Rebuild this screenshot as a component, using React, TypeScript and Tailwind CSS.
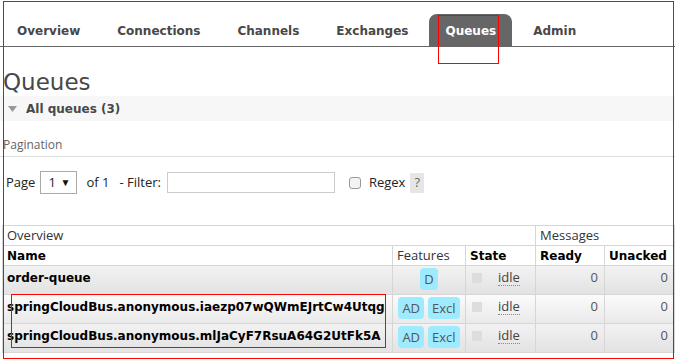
import React from "react";

const NAV = ["Overview", "Connections", "Channels", "Exchanges", "Queues", "Admin"];

interface QueueRow {
  name: string;
  features: string[];
  alt: boolean;
}

const ROWS: QueueRow[] = [
  { name: "order-queue", features: ["D"], alt: true },
  { name: "springCloudBus.anonymous.iaezp07wQWmEJrtCw4Utqg", features: ["AD", "Excl"], alt: false },
  { name: "springCloudBus.anonymous.mlJaCyF7RsuA64G2UtFk5A", features: ["AD", "Excl"], alt: true },
];

const verdana = "font-['DejaVu_Sans',Verdana,sans-serif]";
const body = "font-['Open_Sans','Noto_Sans',sans-serif]";

function Nav() {
  return (
    <div className="flex h-[47px] items-end gap-[5px] border-b border-[#666] pl-px">
      {NAV.map((n) => (
        <div
          key={n}
          className={`flex h-8 items-center px-4 pt-[2px] text-[12px] font-bold ${verdana} ${
            n === "Queues" ? "rounded-t-[8px] bg-[#666] text-white" : "text-[#484848]"
          }`}
        >
          {n}
        </div>
      ))}
    </div>
  );
}

function Pagination() {
  return (
    <>
      <div className={`mt-4 h-[20px] border-b border-[#ddd] pl-[3px] text-[12px] leading-4 text-[#666] ${body}`}>
        Pagination
      </div>
      <div className={`mt-[14px] flex h-[23px] items-center pl-[6px] text-[13px] text-[#222] ${body}`}>
        <span>Page</span>
        <div className="ml-[5px] flex h-[23px] w-[37px] items-center justify-between border border-[#aaa] pl-[7px] pr-[6px]">
          <span>1</span>
          <span className="text-[10px] text-[#111]">▼</span>
        </div>
        <span className="ml-[9px]">of 1</span>
        <span className="ml-[10px]">- Filter:</span>
        <div className="ml-[6px] h-[21px] w-[168px] border border-[#ccc]" />
        <div className="ml-[14px] h-[12px] w-[12px] rounded-[3px] border border-[#999] bg-[#f3f3f3]" />
        <span className="ml-[8px]">Regex</span>
        <span className="ml-[5px] flex h-[20px] w-[14px] items-center justify-center bg-[#e6e6e6] text-[#666]">?</span>
      </div>
    </>
  );
}

function Badge({ label }: { label: string }) {
  return (
    <span className="inline-flex h-[22px] items-center rounded-[4px] bg-[#9eeaff] px-[4px] text-[13px] leading-none text-[#555]">
      {label}
    </span>
  );
}

function QueueTable() {
  const cell = "border border-[#d6d6d6] px-[4px]";
  return (
    <table className={`ml-[2px] mt-[31px] w-[672px] table-fixed border-collapse ${body}`}>
      <colgroup>
        <col className="w-[390px]" />
        <col className="w-[73px]" />
        <col className="w-[70px]" />
        <col className="w-[69px]" />
        <col className="w-[70px]" />
      </colgroup>
      <thead>
        <tr className="h-[20px] text-[13px] leading-none text-[#333]">
          <th colSpan={3} className={`${cell} text-left font-normal`}>Overview</th>
          <th colSpan={2} className={`${cell} text-left font-normal`}>Messages</th>
        </tr>
        <tr className="h-[20px] text-[12px] leading-none text-black">
          <th className={`${cell} text-left font-bold ${verdana}`}>Name</th>
          <th className={`${cell} text-left text-[13px] font-normal text-[#333]`}>Features</th>
          <th className={`${cell} text-left font-bold ${verdana}`}>State</th>
          <th className={`${cell} text-left font-bold ${verdana}`}>Ready</th>
          <th className={`${cell} text-left font-bold ${verdana}`}>Unacked</th>
        </tr>
      </thead>
      <tbody>
        {ROWS.map((r) => (
          <tr
            key={r.name}
            className={`h-[29px] ${
              r.alt
                ? "bg-gradient-to-b from-[#f2f2f2] to-[#e2e2e2]"
                : "bg-gradient-to-b from-[#fbfbfb] to-[#e9e9e9]"
            }`}
          >
            <td className={`${cell} pb-[4px] text-[12px] font-bold whitespace-nowrap text-black ${verdana}`}>
              {r.name}
            </td>
            <td className={`${cell} pb-[2px] text-center`}>
              <div className="flex justify-center gap-[4px]">
                {r.features.map((f) => (
                  <Badge key={f} label={f} />
                ))}
              </div>
            </td>
            <td className={`${cell} pb-[4px]`}>
              <div className="flex items-center">
                <span className="ml-[2px] h-[10px] w-[10px] bg-[#ddd]" />
                <span className="ml-[16px] border-b border-dotted border-[#888] text-[13px] leading-[15px] text-[#444]">
                  idle
                </span>
              </div>
            </td>
            <td className={`${cell} pb-[4px] pr-[6px] text-right text-[13px] text-[#555]`}>0</td>
            <td className={`${cell} pb-[4px] pr-[6px] text-right text-[13px] text-[#555]`}>0</td>
          </tr>
        ))}
      </tbody>
    </table>
  );
}

export default function App() {
  return (
    <div className="relative h-[360px] w-[675px] overflow-hidden bg-white">
      <Nav />
      <h1 className={`mt-[22px] pl-[3px] text-[23px] font-normal leading-[27px] text-[#484848] ${verdana}`}>
        Queues
      </h1>
      <div className="flex h-[25px] items-center bg-[#f7f7f7] pl-[8px]">
        <svg width="9" height="6" viewBox="0 0 9 6">
          <path d="M0 0h9L4.5 6z" fill="#999" />
        </svg>
        <span className={`ml-[9px] text-[12px] font-bold text-[#484848] ${verdana}`}>All queues (3)</span>
      </div>
      <Pagination />
      <QueueTable />

      {/* red annotation boxes */}
      <div className="absolute left-[3px] top-[1px] h-[358px] w-[671px] border border-[#ff0000]" />
      <div className="absolute left-[438px] top-[15px] h-[49px] w-[61px] border border-[#ff0000]" />
      <div className="absolute left-[11px] top-[294px] h-[54px] w-[375px] border border-[#ff0000]" />
    </div>
  );
}
